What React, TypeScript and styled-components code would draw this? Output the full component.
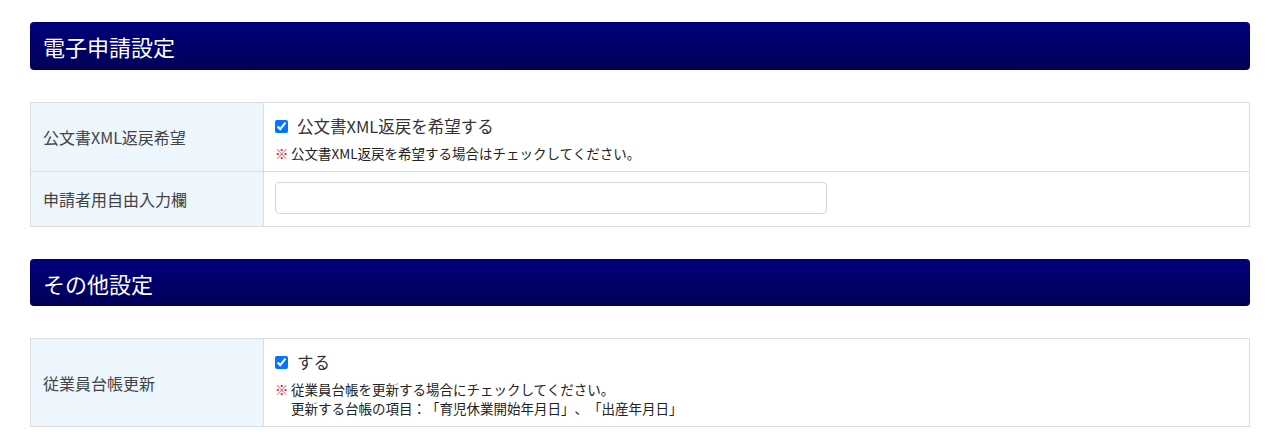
import styled, { createGlobalStyle } from "styled-components";

const GlobalStyle = createGlobalStyle`
  body {
    margin: 0;
    background: #fff;
    font-family: "Noto Sans CJK JP", "Noto Sans", sans-serif;
    color: #333;
    text-spacing-trim: space-all;
  }
`;

const Page = styled.div`
  padding: 22px 30px 0;
`;

const SectionHeader = styled.h2<{ $height: number }>`
  margin: 0;
  height: ${({ $height }) => $height}px;
  display: flex;
  align-items: center;
  padding-left: 13px;
  border-radius: 4px;
  background: linear-gradient(to bottom, #00007d, #000058);
  color: #fff;
  font-size: 22px;
  font-weight: normal;
`;

const Table = styled.table`
  width: 100%;
  margin: 32px 0;
  border-collapse: collapse;
  font-size: 16px;

  &:last-child {
    margin-bottom: 0;
  }
`;

const LabelCell = styled.th`
  width: 233px;
  box-sizing: border-box;
  padding: 0 12px;
  background: #edf5fd;
  border: 1px solid #dcdcdc;
  text-align: left;
  font-weight: normal;
  color: #444;
`;

const ValueCell = styled.td<{ $pad: string }>`
  padding: ${({ $pad }) => $pad};
  border: 1px solid #dcdcdc;
`;

const CheckLine = styled.label`
  display: flex;
  align-items: center;
  height: 26px;
  font-size: 16.5px;
  color: #333;
`;

const Check = styled.input.attrs({ type: "checkbox" })`
  width: 13px;
  height: 13px;
  margin: 0 9px 0 0;
`;

const Note = styled.div`
  margin-top: 5px;
  display: flex;
  font-size: 13.5px;
  line-height: 19px;
  color: #222;
`;

const Mark = styled.span`
  color: #e8141e;
  font-weight: bold;
  width: 16px;
  flex-shrink: 0;
`;

const TextInput = styled.input.attrs({ type: "text" })`
  display: block;
  width: 552px;
  height: 32px;
  box-sizing: border-box;
  border: 1px solid #d4d4d4;
  border-radius: 4px;
  padding: 0 8px;
  font-size: 14px;
`;

export default function App() {
  return (
    <>
      <GlobalStyle />
      <Page>
        <SectionHeader $height={48}>電子申請設定</SectionHeader>
        <Table>
          <tbody>
            <tr>
              <LabelCell>公文書XML返戻希望</LabelCell>
              <ValueCell $pad="10px 11px 8px">
                <CheckLine>
                  <Check defaultChecked />
                  公文書XML返戻を希望する
                </CheckLine>
                <Note>
                  <Mark>※</Mark>
                  <span>公文書XML返戻を希望する場合はチェックしてください。</span>
                </Note>
              </ValueCell>
            </tr>
            <tr>
              <LabelCell>申請者用自由入力欄</LabelCell>
              <ValueCell $pad="10px 11px 12px">
                <TextInput />
              </ValueCell>
            </tr>
          </tbody>
        </Table>
        <SectionHeader $height={47}>その他設定</SectionHeader>
        <Table>
          <tbody>
            <tr>
              <LabelCell>従業員台帳更新</LabelCell>
              <ValueCell $pad="10px 11px 8px">
                <CheckLine>
                  <Check defaultChecked />
                  する
                </CheckLine>
                <Note>
                  <Mark>※</Mark>
                  <span>
                    従業員台帳を更新する場合にチェックしてください。
                    <br />
                    更新する台帳の項目：「育児休業開始年月日」、「出産年月日」
                  </span>
                </Note>
              </ValueCell>
            </tr>
          </tbody>
        </Table>
      </Page>
    </>
  );
}
